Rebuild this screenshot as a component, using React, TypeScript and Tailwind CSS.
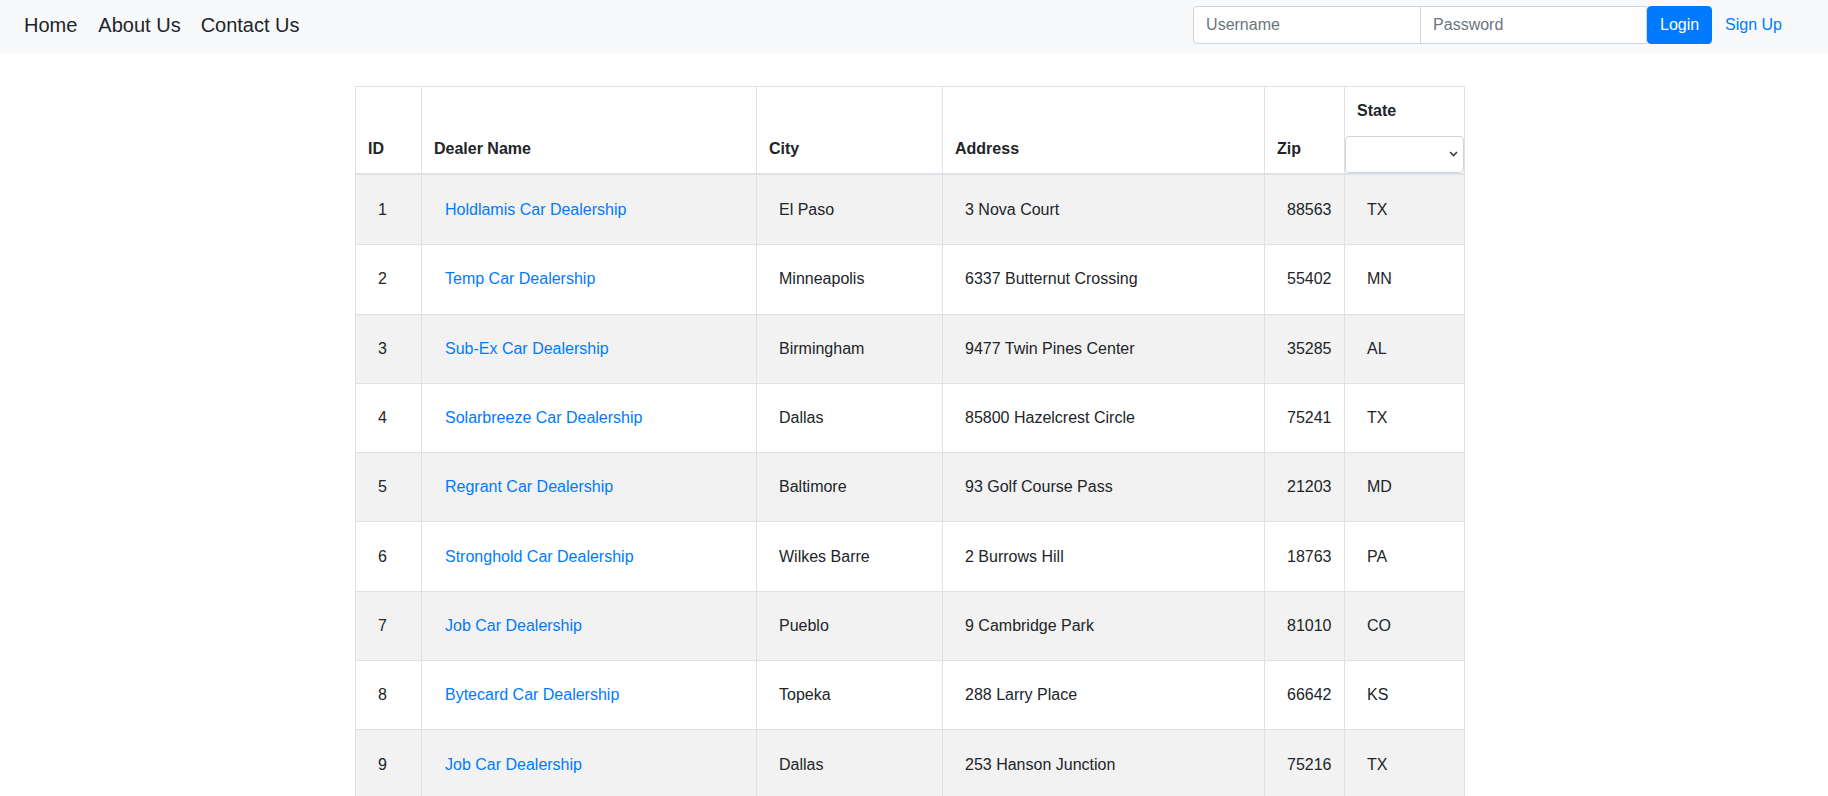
import React from "react";

const rows = [
  ["1", "Holdlamis Car Dealership", "El Paso", "3 Nova Court", "88563", "TX"],
  ["2", "Temp Car Dealership", "Minneapolis", "6337 Butternut Crossing", "55402", "MN"],
  ["3", "Sub-Ex Car Dealership", "Birmingham", "9477 Twin Pines Center", "35285", "AL"],
  ["4", "Solarbreeze Car Dealership", "Dallas", "85800 Hazelcrest Circle", "75241", "TX"],
  ["5", "Regrant Car Dealership", "Baltimore", "93 Golf Course Pass", "21203", "MD"],
  ["6", "Stronghold Car Dealership", "Wilkes Barre", "2 Burrows Hill", "18763", "PA"],
  ["7", "Job Car Dealership", "Pueblo", "9 Cambridge Park", "81010", "CO"],
  ["8", "Bytecard Car Dealership", "Topeka", "288 Larry Place", "66642", "KS"],
  ["9", "Job Car Dealership", "Dallas", "253 Hanson Junction", "75216", "TX"],
];

function HeadCell({ label }: { label: string }) {
  return (
    <div className="box-border h-[88px] border-r border-b-2 border-[#dee2e6] flex items-end px-3 pb-3 font-bold leading-6">
      {label}
    </div>
  );
}

export default function App() {
  return (
    <div className="min-h-screen bg-white font-['Liberation_Sans',Arial,sans-serif] text-[#212529] text-base leading-6">
      <nav className="h-[53px] bg-[#f8f9fa] flex items-center justify-between pb-[3px] pl-[24px] pr-[46px]">
        <div className="flex items-center text-[20px] leading-[30px] text-[#212529]">
          <a href="#">Home</a>
          <a href="#" className="ml-[21px]">About Us</a>
          <a href="#" className="ml-[20px]">Contact Us</a>
        </div>
        <div className="flex items-center">
          <input
            placeholder="Username"
            className="box-border w-[228px] h-[38px] border border-[#ced4da] rounded-l-[4px] bg-white px-3 text-base text-[#495057] placeholder:text-[#6c757d] outline-none"
          />
          <input
            placeholder="Password"
            type="password"
            className="box-border -ml-px w-[227px] h-[38px] border border-[#ced4da] bg-white px-3 text-base text-[#495057] placeholder:text-[#6c757d] outline-none"
          />
          <button className="box-border w-[65px] h-[38px] rounded-[4px] bg-[#007bff] text-white text-base border border-[#007bff]">
            Login
          </button>
          <a href="#" className="ml-[13px] text-[#007bff]">Sign Up</a>
        </div>
      </nav>

      <div className="mt-[33px] ml-[355px] w-[1110px] box-border border-l border-t border-[#dee2e6] grid grid-cols-[66px_335px_186px_322px_80px_120px]">
        <HeadCell label="ID" />
        <HeadCell label="Dealer Name" />
        <HeadCell label="City" />
        <HeadCell label="Address" />
        <HeadCell label="Zip" />
        <div className="box-border h-[88px] border-r border-b-2 border-[#dee2e6] flex flex-col justify-end">
          <div className="px-3 font-bold leading-6">State</div>
          <div className="relative mt-[13px] h-[37px]">
            <select className="appearance-none box-border w-full h-[37px] border border-[#ced4da] rounded-[4px] bg-white outline-none" defaultValue="">
              <option value=""></option>
            </select>
            <svg className="pointer-events-none absolute right-[6px] top-[15px]" width="9" height="6" viewBox="0 0 9 6">
              <path d="M1 1 L4.5 4.5 L8 1" fill="none" stroke="#3c3c3c" strokeWidth="1.6" />
            </svg>
          </div>
        </div>

        {rows.map((r, i) => (
          <React.Fragment key={i}>
            {r.map((c, j) => (
              <div
                key={j}
                className={`box-border ${i === 0 ? "h-[70.3px]" : "h-[69.3px]"} border-r border-b border-[#dee2e6] flex items-center ${j === 1 ? "pl-[23px]" : "pl-[22px]"} ${i % 2 === 0 ? "bg-[#f2f2f2]" : "bg-white"}`}
              >
                {j === 1 ? (
                  <a href="#" className="text-[#007bff]">{c}</a>
                ) : (
                  <span>{c}</span>
                )}
              </div>
            ))}
          </React.Fragment>
        ))}
      </div>
    </div>
  );
}
